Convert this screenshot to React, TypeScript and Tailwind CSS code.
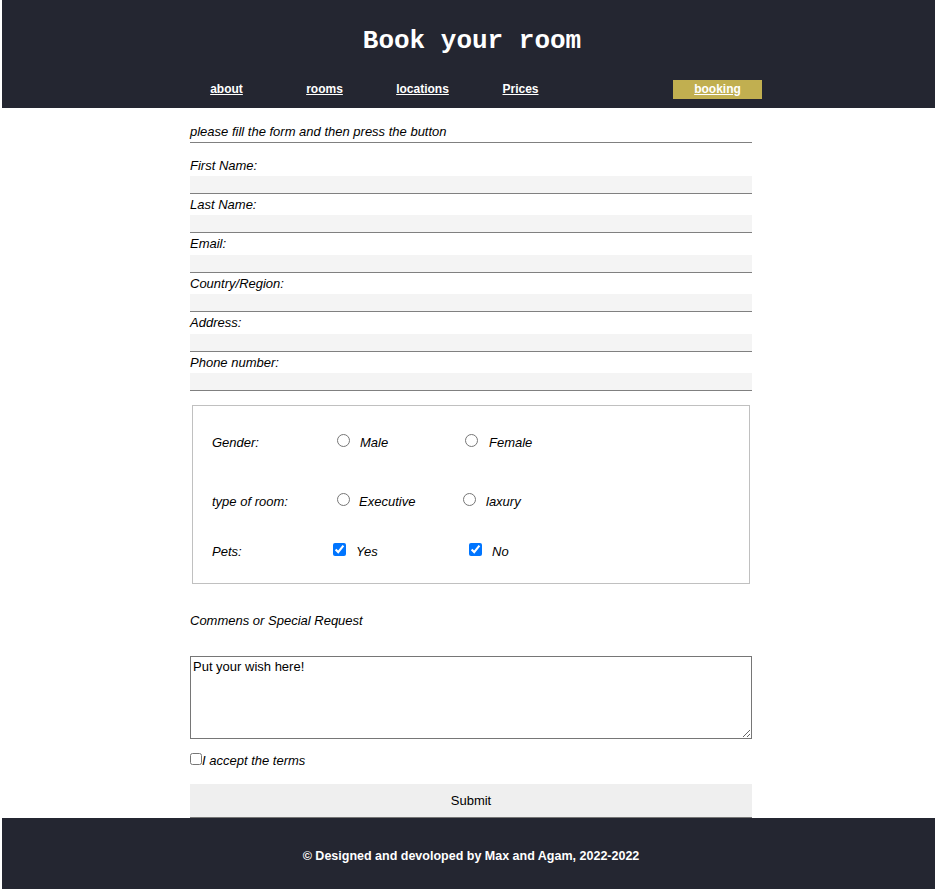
import React from "react";

const sans = { fontFamily: '"Liberation Sans", Arial, sans-serif' };

function OptionRow({
  label,
  labelW,
  items,
  className,
}: {
  label: string;
  labelW: string;
  items: { input: React.ReactNode; text: string; wrapW: string; gap: string }[];
  className: string;
}) {
  return (
    <div className={`flex items-baseline h-[15px] leading-[15px] ${className}`}>
      <span className={`italic ${labelW} shrink-0`}>{label}</span>
      {items.map((it, i) => (
        <div key={i} className={`flex items-baseline shrink-0 ${it.wrapW}`}>
          {it.input}
          <span className={`italic ${it.gap}`}>{it.text}</span>
        </div>
      ))}
    </div>
  );
}

export default function App() {
  const fields = ["First Name:", "Last Name:", "Email:", "Country/Region:", "Address:", "Phone number:"];
  const navItems = ["about", "rooms", "locations", "Prices"];
  const radio = (name: string) => (
    <input type="radio" name={name} className="w-[13px] h-[13px] shrink-0 accent-[#0075ff]" />
  );
  const check = () => (
    <input type="checkbox" defaultChecked className="w-[13px] h-[13px] shrink-0 accent-[#0075ff]" />
  );
  return (
    <div className="bg-white text-black text-[13px] min-h-[889px]" style={sans}>
      <header className="mx-[2px] h-[108px] bg-[#242631] pt-[26px]">
        <h1
          className="text-center text-white font-bold text-[26px] leading-[30px] pl-[7px]"
          style={{ fontFamily: '"Liberation Mono", "DejaVu Sans Mono", monospace' }}
        >
          Book your room
        </h1>
        <nav className="mt-[24px] ml-[180px] flex gap-[9px] h-[19px]">
          {navItems.map((n) => (
            <a
              key={n}
              href="#"
              className="w-[89px] text-center text-white font-bold text-[12px] leading-[19px] underline"
            >
              {n}
            </a>
          ))}
          <span className="w-[89px]" />
          <a
            href="#"
            className="w-[89px] ml-[1px] text-center text-white font-bold text-[12px] leading-[19px] underline bg-[#c1af50]"
          >
            booking
          </a>
        </nav>
      </header>

      <main className="ml-[190px] w-[562px]">
        <p className="pt-[16px] pb-[3px] leading-[15px] italic border-b border-[#808080]">
          please fill the form and then press the button
        </p>
        {fields.map((f, i) => (
          <div key={f}>
            <div className={`${i === 0 ? "mt-[14.6px]" : "mt-[3px]"} leading-[15px] italic`}>{f}</div>
            <input
              type="text"
              className="mt-[3.4px] block w-full h-[18px] bg-[#f4f4f4] border-b border-[#808080] outline-none"
            />
          </div>
        ))}

        <fieldset className="mt-[14px] mx-[2px] h-[179px] border border-[#c0c0c0] pt-[28px] pl-[19px]">
          <OptionRow
            label="Gender:"
            labelW="w-[125px]"
            className=""
            items={[
              { input: radio("gender"), text: "Male", wrapW: "w-[128px]", gap: "ml-[10px]" },
              { input: radio("gender"), text: "Female", wrapW: "w-[120px]", gap: "ml-[11px]" },
            ]}
          />
          <OptionRow
            label="type of room:"
            labelW="w-[125px]"
            className="mt-[44.5px]"
            items={[
              { input: radio("room"), text: "Executive", wrapW: "w-[126px]", gap: "ml-[9px]" },
              { input: radio("room"), text: "laxury", wrapW: "w-[120px]", gap: "ml-[10px]" },
            ]}
          />
          <OptionRow
            label="Pets:"
            labelW="w-[121px]"
            className="mt-[34.5px]"
            items={[
              { input: check(), text: "Yes", wrapW: "w-[136px]", gap: "ml-[10px]" },
              { input: check(), text: "No", wrapW: "w-[120px]", gap: "ml-[10px]" },
            ]}
          />
        </fieldset>

        <p className="mt-[29.5px] leading-[15px] italic">Commens or Special Request</p>

        <textarea
          defaultValue="Put your wish here!"
          className="mt-[27.5px] block w-full h-[83px] border border-[#767676] p-[2px] text-[13px] leading-[15px] text-black"
          style={sans}
        />

        <label className="mt-[14px] flex items-baseline leading-[15px]">
          <input type="checkbox" className="w-[12px] h-[12px] shrink-0" />
          <span className="italic">I accept the terms</span>
        </label>

        <button
          type="button"
          className="mt-[16px] block w-full h-[34px] bg-[#efefef] border-b border-[#767676] text-[13px] text-black"
          style={sans}
        >
          Submit
        </button>
      </main>

      <footer className="mx-[2px] h-[71px] bg-[#242631] pt-[31px]">
        <p className="text-center text-white font-bold text-[12.5px] leading-[15px] pl-[5px]">
          © Designed and devoloped by Max and Agam, 2022-2022
        </p>
      </footer>
    </div>
  );
}
